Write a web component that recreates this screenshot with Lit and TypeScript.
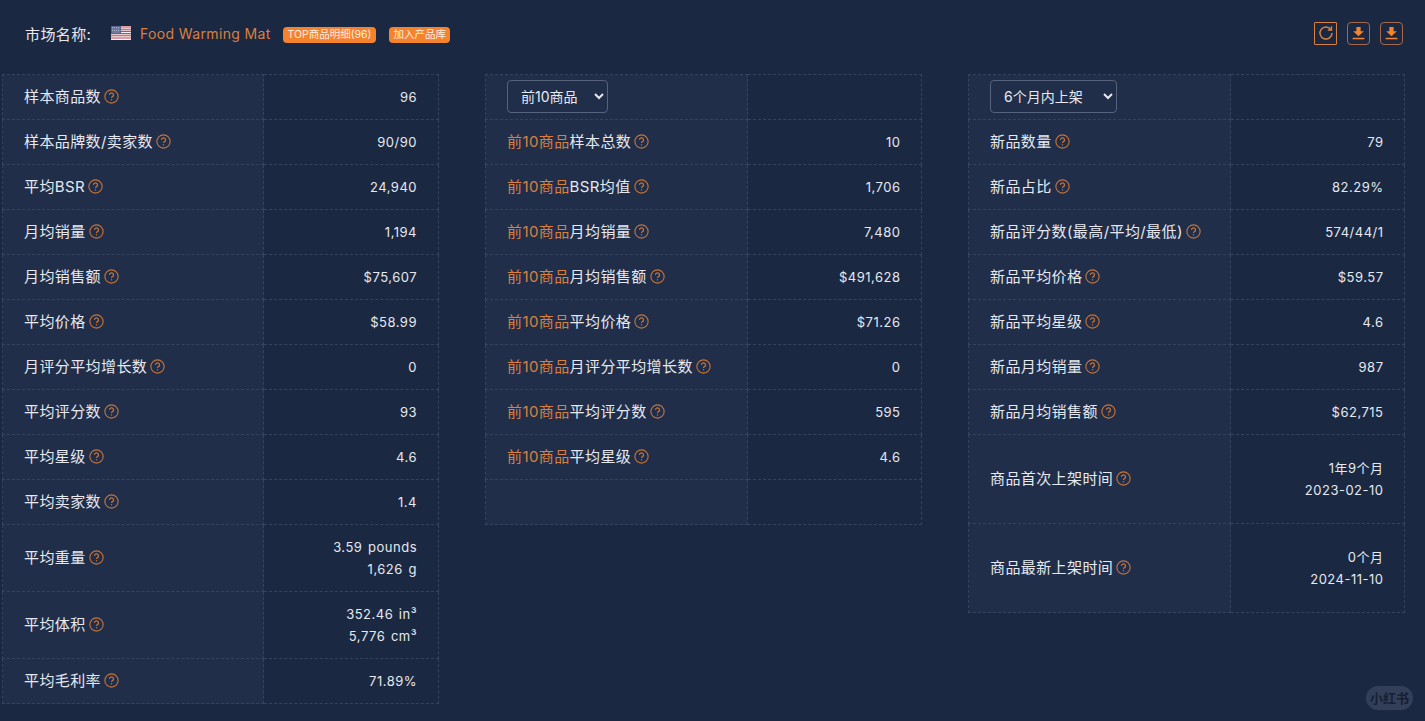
import { LitElement, html, css, svg } from 'lit'
import { customElement } from 'lit/decorators.js'

type Row = { label: string; accent?: boolean; value: string[]; tall?: number }

const general: Row[] = [
  { label: '样本商品数', value: ['96'] },
  { label: '样本品牌数/卖家数', value: ['90/90'] },
  { label: '平均BSR', value: ['24,940'] },
  { label: '月均销量', value: ['1,194'] },
  { label: '月均销售额', value: ['$75,607'] },
  { label: '平均价格', value: ['$58.99'] },
  { label: '月评分平均增长数', value: ['0'] },
  { label: '平均评分数', value: ['93'] },
  { label: '平均星级', value: ['4.6'] },
  { label: '平均卖家数', value: ['1.4'] },
  { label: '平均重量', value: ['3.59 pounds', '1,626 g'], tall: 67 },
  { label: '平均体积', value: ['352.46 in³', '5,776 cm³'], tall: 67 },
  { label: '平均毛利率', value: ['71.89%'] },
]

const top10: Row[] = [
  { label: '样本总数', accent: true, value: ['10'] },
  { label: 'BSR均值', accent: true, value: ['1,706'] },
  { label: '月均销量', accent: true, value: ['7,480'] },
  { label: '月均销售额', accent: true, value: ['$491,628'] },
  { label: '平均价格', accent: true, value: ['$71.26'] },
  { label: '月评分平均增长数', accent: true, value: ['0'] },
  { label: '平均评分数', accent: true, value: ['595'] },
  { label: '平均星级', accent: true, value: ['4.6'] },
]

const newItems: Row[] = [
  { label: '新品数量', value: ['79'] },
  { label: '新品占比', value: ['82.29%'] },
  { label: '新品评分数(最高/平均/最低)', value: ['574/44/1'] },
  { label: '新品平均价格', value: ['$59.57'] },
  { label: '新品平均星级', value: ['4.6'] },
  { label: '新品月均销量', value: ['987'] },
  { label: '新品月均销售额', value: ['$62,715'] },
  { label: '商品首次上架时间', value: ['1年9个月', '2023-02-10'], tall: 89 },
  { label: '商品最新上架时间', value: ['0个月', '2024-11-10'], tall: 89 },
]

const helpIcon = svg`<svg class="help" viewBox="0 0 14 14" width="15" height="15" fill="none" stroke="currentColor">
  <circle cx="7" cy="7" r="6.2" stroke-width="1.05"/>
  <path d="M5.1 5.5a1.9 1.9 0 1 1 2.8 1.6c-.6.4-.9.7-.9 1.4" stroke-width="1.15"/>
  <path d="M7 9.5v1.2" stroke-width="1.15"/>
</svg>`

const flag = svg`<svg class="flag" viewBox="0 0 20 14" width="20" height="14">
  <rect width="20" height="14" fill="#f2f2f2"/>
  <path d="M0 1h20M0 3.2h20M0 5.4h20M0 7.6h20M0 9.8h20M0 12h20" stroke="#c8485a" stroke-width="1.1"/>
  <rect width="10" height="7.6" fill="#5a6690"/>
  <path d="M1 1.5h8M1.6 3h7M1 4.5h8M1.6 6h7" stroke="#d6d9e6" stroke-width=".7" stroke-dasharray="1 .9"/>
</svg>`

@customElement('app-root')
export class AppRoot extends LitElement {
  static styles = css`
    :host {
      display: block;
      min-height: 721px;
      background: #1b2842;
      color: #e6e9ef;
      font-family: Inter, "Noto Sans CJK SC", sans-serif;
      font-size: 15px;
      letter-spacing: 0.4px;
      position: relative;
      overflow: hidden;
    }

    .head {
      display: flex;
      align-items: center;
      height: 74px;
      padding: 0 21px 8px 25px;
      box-sizing: border-box;
    }

    .head .name { width: 65px; margin-right: 21px; white-space: nowrap; }
    .flag { margin-right: 9px; }

    .market {
      color: #d9803f;
      font-size: 14px;
      letter-spacing: 0.36px;
      width: 131px;
      white-space: nowrap;
      margin-right: 12px;
    }

    .badge {
      background: #f5822d;
      color: #fdeee2;
      font-size: 10.5px;
      letter-spacing: 0;
      line-height: 16px;
      height: 16px;
      padding: 0 4.5px;
      border-radius: 4px;
      margin-right: 13px;
      margin-top: 3px;
    }

    .tools {
      margin-left: auto;
      display: flex;
      gap: 10px;
      margin-right: 1px;
    }

    .tool {
      width: 23px;
      height: 23px;
      box-sizing: border-box;
      border: 1px solid #a5684a;
      border-radius: 4px;
      color: #f5822d;
      display: flex;
      align-items: center;
      justify-content: center;
    }

    .tool.first { border-radius: 1px; border-color: #d9803f; color: #d9803f; }

    .tables {
      display: grid;
      grid-template-columns: repeat(3, 437px);
      column-gap: 46px;
      align-items: start;
      padding-left: 2px;
    }

    table {
      width: 437px;
      table-layout: fixed;
      border-collapse: collapse;
    }

    td {
      border: 1px dashed #35435f;
      height: 45px;
      padding: 0 21px 0 21px;
      box-sizing: border-box;
    }

    td.key {
      width: 261px;
      background: #202e4a;
      white-space: nowrap;
      padding-bottom: 4px;
    }

    td.val {
      text-align: right;
      font-size: 13px;
      letter-spacing: 0.5px;
      word-spacing: 1.5px;
      line-height: 22px;
    }

    table.wide td.key { width: 262px; }
    table.wide td.val { padding-right: 20.5px; }

    .hl { color: #d9803f; }

    .help {
      color: #c4743a;
      vertical-align: -2px;
      margin-left: 3px;
    }

    select {
      height: 33px;
      margin-top: 2px;
      background: #202e4a;
      color: #e6e9ef;
      border: 1px solid #56637d;
      border-radius: 4px;
      font: inherit;
      font-size: 14px;
      padding: 0 9px;
      display: block;
    }

    .s1 { width: 101px; }
    .s2 { width: 127px; }

    .mark {
      position: absolute;
      left: 1366px;
      top: 686px;
      width: 47px;
      height: 24px;
      border-radius: 12px;
      background: #333f58;
      color: #171f33;
      font-size: 13px;
      letter-spacing: 0;
      font-weight: 700;
      line-height: 24px;
      text-align: center;
    }
  `

  private row(r: Row, accentText = '') {
    return html`<tr style=${r.tall ? `height:${r.tall}px` : ''}>
      <td class="key">${accentText ? html`<span class="hl">${accentText}</span>` : ''}${r.label}${helpIcon}</td>
      <td class="val">${r.value.map((v) => html`<div>${v}</div>`)}</td>
    </tr>`
  }

  private download() {
    return html`<div class="tool"><svg viewBox="0 0 14 14" width="15" height="15" fill="currentColor">
      <path d="M5 1h4v4h3L7 9.6 2 5h3z"/><rect x="1.5" y="11" width="11" height="1.4"/>
    </svg></div>`
  }

  render() {
    return html`
      <div class="head">
        <span class="name">市场名称:</span>
        ${flag}
        <span class="market">Food Warming Mat</span>
        <span class="badge">TOP商品明细(96)</span>
        <span class="badge">加入产品库</span>
        <div class="tools">
          <div class="tool first"><svg viewBox="0 0 14 14" width="16" height="16" fill="none" stroke="currentColor" stroke-width="1.3">
            <path d="M11.5 4.2A5.3 5.3 0 1 0 12.3 7"/><path d="M8.6 4.4h3.2V1.2" stroke-width="1.2"/>
          </svg></div>
          ${this.download()}
          ${this.download()}
        </div>
      </div>
      <div class="tables">
        <table>${general.map((r) => this.row(r))}</table>
        <table class="wide">
          <tr>
            <td class="key"><select class="s1"><option>前10商品</option></select></td>
            <td class="val"></td>
          </tr>
          ${top10.map((r) => this.row(r, '前10商品'))}
          <tr><td class="key"></td><td class="val"></td></tr>
        </table>
        <table class="wide">
          <tr>
            <td class="key"><select class="s2"><option>6个月内上架</option></select></td>
            <td class="val"></td>
          </tr>
          ${newItems.map((r) => this.row(r))}
        </table>
      </div>
      <div class="mark">小红书</div>
    `
  }
}
